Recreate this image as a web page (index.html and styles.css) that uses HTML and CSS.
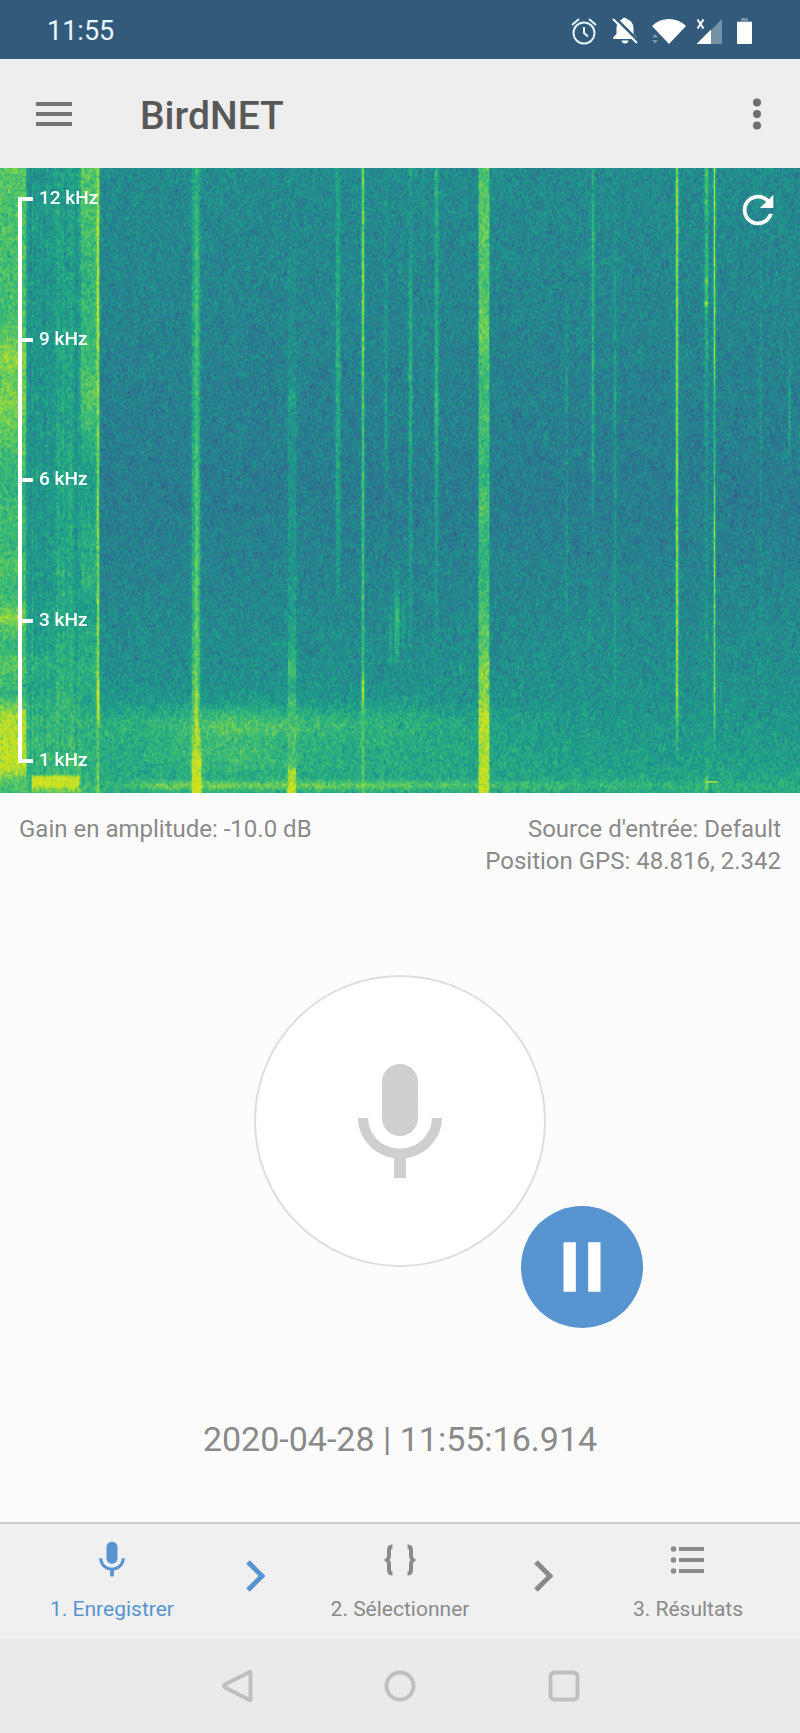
FILE: index.html
```html
<!DOCTYPE html>
<html lang="fr">

<head>
    <meta charset="UTF-8">
    <meta name="viewport" content="width=device-width, initial-scale=1.0">
    <title>BirdNET</title>
    <link rel="stylesheet" href="styles.css">
</head>

<body>

    <div class="status">
        <span>11:55</span>
        <div class="status-icons">
            <svg class="alarm" width="26" height="28" viewBox="0 0 26 28" fill="none" stroke="#e3f3ff" stroke-width="2">
                <circle cx="13" cy="16" r="10.5" />
                <path d="M13 10v6l4 3.5M1 8l7-6M25 8l-7-6" />
            </svg>
            <svg class="bell" width="28" height="28" viewBox="0 0 28 28">
                <path fill="#fff" d="M7.5 4.5Q9 3 11 2.500C11 0 16 0 16.500 2.500Q22 4 22.500 11V17L26 20.500V22H2V20.500L5.500 17V11Q5.500 8 6.500 6.500zM10.500 23.500H17.500Q17 26.500 14 26.500T10.500 23.500z" />
                <path stroke="#325a7b" stroke-width="2.500" d="M4 .5L28 24.500" />
                <path stroke="#fff" stroke-width="2" d="M2 2L26 26" />
            </svg>
            <svg class="wifi" width="36" height="28" viewBox="0 0 36 28">
                <path fill="#fff" d="M18 27L1 9Q8 2 18 2T35 9z" />
                <path fill="#7d98ae" d="M1 20.500L4 17l3 3.500zM1 23h6l-3 3.500z" />
            </svg>
            <svg class="signal" width="27" height="28" viewBox="0 0 27 28">
                <path fill="#7690a5" d="M26 2V27H15V13z" />
                <path fill="#fff" d="M15 12.500V27H.5z" />
                <path fill="none" stroke="#fff" stroke-width="2" d="M1.500 2.500L7.500 11.500M7.500 2.500L1.500 11.500" />
            </svg>
            <svg class="battery" width="15" height="28" viewBox="0 0 15 28">
                <path fill="#7690a5" d="M4 1h7v3h4v1H0V4h4z" />
                <rect y="5" width="15" height="22" rx="1" fill="#fff" />
            </svg>
        </div>
    </div>

    <header class="toolbar">
        <button type="button" aria-label="Menu">
            <svg width="48" height="48" viewBox="0 0 24 24" fill="#737373"><path d="M3 18h18v-2H3v2zm0-5h18v-2H3v2zm0-7v2h18V6H3z" /></svg>
        </button>
        <h1>BirdNET</h1>
        <button type="button" aria-label="Options">
            <svg width="48" height="48" viewBox="0 0 24 24" fill="#6e6e6e"><circle cx="12" cy="6.200" r="2" /><circle cx="12" cy="12" r="2" /><circle cx="12" cy="17.800" r="2" /></svg>
        </button>
    </header>

    <section class="spectro">
        <canvas id="spectro" width="800" height="625"></canvas>
        <ul class="scale">
            <li><span>12 kHz</span></li>
            <li><span>9 kHz</span></li>
            <li><span>6 kHz</span></li>
            <li><span>3 kHz</span></li>
            <li><span>1 kHz</span></li>
        </ul>
        <button type="button" class="refresh" aria-label="Actualiser">
            <svg width="46" height="46" viewBox="0 0 24 24" fill="#fff"><path d="M17.650 6.350C16.200 4.900 14.210 4 12 4c-4.420 0-7.990 3.580-7.990 8s3.570 8 7.990 8c3.730 0 6.840-2.550 7.730-6h-2.080c-.82 2.330-3.040 4-5.650 4-3.310 0-6-2.690-6-6s2.690-6 6-6c1.660 0 3.140.69 4.220 1.780L13 11h7V4l-2.350 2.350z" /></svg>
        </button>
    </section>

    <main class="content">
        <div class="info">
            <p>Gain en amplitude: -10.0 dB</p>
            <p class="right">Source d'entrée: Default<br>Position GPS: 48.816, 2.342</p>
        </div>

        <div class="recorder">
            <button type="button" class="mic" aria-label="Enregistrer">
                <svg width="144" height="144" viewBox="0 -0.500 24 24" fill="#cfcfcf"><path d="M12 14c1.660 0 2.990-1.340 2.990-3L15 5c0-1.660-1.340-3-3-3S9 3.340 9 5v6c0 1.660 1.340 3 3 3zm5.300-3c0 3-2.540 5.100-5.300 5.100S6.700 14 6.700 11H5c0 3.410 2.720 6.230 6 6.720V21h2v-3.280c3.280-.48 6-3.300 6-6.720h-1.700z" /></svg>
            </button>
            <button type="button" class="pause" aria-label="Pause">
                <svg width="74" height="74" viewBox="0 0 24 24" fill="#fff"><path d="M6 4h4v16H6zM14 4h4v16h-4z" /></svg>
            </button>
        </div>

        <time class="clock">2020-04-28 | 11:55:16.914</time>
    </main>

    <nav class="steps">
        <a href="#enregistrer" class="step active">
            <svg width="44" height="44" viewBox="0 0 24 24" fill="currentColor"><path d="M12 14c1.660 0 2.990-1.340 2.990-3L15 5c0-1.660-1.340-3-3-3S9 3.340 9 5v6c0 1.660 1.340 3 3 3zm5.300-3c0 3-2.540 5.100-5.300 5.100S6.700 14 6.700 11H5c0 3.410 2.720 6.230 6 6.720V21h2v-3.280c3.280-.48 6-3.300 6-6.720h-1.700z" /></svg>
            1. Enregistrer
        </a>
        <svg class="arrow active" width="24" height="34" viewBox="0 0 24 34" fill="none" stroke="currentColor" stroke-width="5"><path d="M4 3l14 14L4 31" /></svg>
        <a href="#selectionner" class="step">
            <svg width="44" height="44" viewBox="0 0 44 44" fill="none" stroke="currentColor" stroke-width="4">
                <path d="M14.500 8.500q-3.500 0-3.500 3.500v5.500q0 3-2 4.500 2 1.500 2 4.500V32q0 3.500 3.500 3.500M29.500 8.500Q33 8.500 33 12v5.500q0 3 2 4.500-2 1.500-2 4.500V32q0 3.500-3.500 3.500" />
            </svg>
            2. Sélectionner
        </a>
        <svg class="arrow" width="24" height="34" viewBox="0 0 24 34" fill="none" stroke="currentColor" stroke-width="5"><path d="M4 3l14 14L4 31" /></svg>
        <a href="#resultats" class="step">
            <svg width="44" height="44" viewBox="0 0 44 44" fill="currentColor">
                <circle cx="7.500" cy="11" r="2.800" /><circle cx="7.500" cy="22" r="2.800" /><circle cx="7.500" cy="33" r="2.800" />
                <path d="M13 9h25v4H13zM13 20h25v4H13zM13 31h25v4H13z" />
            </svg>
            3. Résultats
        </a>
    </nav>

    <div class="navbar">
        <button type="button" aria-label="Retour">
            <svg width="36" height="36" viewBox="-2 0 36 36"><path d="M30.500 4.500v27q0 1-1 .5L5 19.500q-2-1.500 0-3L29.500 4q1-.5 1 .5z" /></svg>
        </button>
        <button type="button" aria-label="Accueil">
            <svg width="36" height="36" viewBox="0 0 36 36"><circle cx="18" cy="18" r="13.500" /></svg>
        </button>
        <button type="button" aria-label="Applications">
            <svg width="36" height="36" viewBox="0 0 36 36"><rect x="4.500" y="4.500" width="27" height="27" rx="4" /></svg>
        </button>
    </div>

    <script src="script.js"></script>
</body>

</html>
```
FILE: styles.css
```css
* {
    box-sizing: border-box;
}

body {
    margin: 0;
    min-height: 100vh;
    display: flex;
    flex-direction: column;
    background: #fcfcfc;
    color: #8a8a8a;
    font-family: Roboto, sans-serif;
}

button {
    border: 0;
    padding: 0;
    background: none;
    cursor: pointer;
}

svg {
    display: block;
}

p {
    margin: 0;
}

.status {
    display: flex;
    justify-content: space-between;
    align-items: center;
    height: 59px;
    padding: 2px 48px 0 47px;
    background: #325a7b;
    color: #e9f7ff;
    font-size: 27px;
}

.status-icons {
    display: flex;
}

.bell {
    margin-left: 14px;
}

.wifi {
    margin-left: 12px;
}

.signal {
    margin-left: 9px;
}

.battery {
    margin-left: 14px;
}

.toolbar {
    display: flex;
    align-items: center;
    height: 109px;
    padding: 0 19px 0 30px;
    background: #eee;
}

.toolbar h1 {
    flex: 1;
    margin: 0;
    padding: 4px 0 0 62px;
    color: #585858;
    font-size: 39px;
    font-weight: 500;
}

.spectro {
    position: relative;
}

.spectro canvas {
    display: block;
    width: 100%;
}

/* frequency scale over the spectrogram */
.scale {
    position: absolute;
    top: 29px;
    bottom: 30px;
    left: 18px;
    display: flex;
    flex-direction: column;
    justify-content: space-between;
    margin: 0;
    padding: 0;
    border-left: 4px solid #fff;
    color: #fff;
    font-size: 19px;
    font-weight: 500;
    list-style: none;
}

.scale li {
    display: flex;
    align-items: center;
    height: 4px;
}

.scale li::before {
    content: "";
    width: 11px;
    height: 4px;
    margin-right: 6px;
    background: #fff;
}

.scale span {
    padding-bottom: 3px;
}

.refresh {
    position: absolute;
    top: 19px;
    right: 19px;
}

.content {
    flex: 1;
    display: flex;
    flex-direction: column;
    align-items: center;
}

.info {
    display: flex;
    justify-content: space-between;
    width: 100%;
    padding: 20px 19px 0;
    font-size: 24px;
    line-height: 32px;
}

.right {
    text-align: right;
}

.recorder {
    position: relative;
    margin-top: 98px;
}

.mic {
    display: flex;
    align-items: center;
    justify-content: center;
    width: 292px;
    height: 292px;
    border: 2px solid #dedede;
    border-radius: 50%;
    background: #fff;
}

.pause {
    position: absolute;
    right: -97px;
    bottom: -61px;
    display: flex;
    align-items: center;
    justify-content: center;
    width: 122px;
    height: 122px;
    border-radius: 50%;
    background: #5894d0;
}

.clock {
    margin-top: 152px;
    font-size: 34px;
    line-height: 40px;
}

.steps {
    display: grid;
    grid-template-columns: 28fr 8fr 28fr 8fr 28fr;
    align-items: center;
    justify-items: center;
    height: 117px;
    padding-bottom: 2px;
    border-top: 2px solid #ccc;
    background: #f0f0f0;
}

.step {
    display: flex;
    flex-direction: column;
    align-items: center;
    gap: 14px;
    padding-bottom: 2px;
    color: #8a8a8a;
    font-size: 21px;
    line-height: 26px;
    text-decoration: none;
}

.arrow {
    margin-bottom: 10px;
}

.active {
    color: #5894d0;
}

.navbar {
    display: flex;
    align-items: center;
    justify-content: center;
    gap: 128px;
    height: 94px;
    background: #eaeaea;
}

.navbar svg {
    fill: none;
    stroke: #bfbfbf;
    stroke-width: 4;
}
```
FILE: script.js
```javascript
var canvas = document.getElementById("spectro");
var ctx = canvas.getContext("2d");
var W = canvas.width, H = canvas.height;

// viridis
var colors = [[68, 1, 84], [72, 40, 120], [62, 74, 137], [49, 104, 142], [38, 130, 142],
    [31, 158, 137], [53, 183, 121], [109, 205, 89], [190, 223, 38], [225, 228, 30]];

var seed = 1155;
function rnd() {
    seed = (seed * 1664525 + 1013904223) % 4294967296;
    return seed / 4294967296;
}

// value at p in a list of [position, value]
function ramp(list, p) {
    if (p <= list[0][0]) return list[0][1];
    for (var i = 1; i < list.length; i++) {
        if (p <= list[i][0]) {
            var a = list[i - 1], b = list[i];
            return a[1] + (b[1] - a[1]) * (p - a[0]) / (b[0] - a[0]);
        }
    }
    return list[list.length - 1][1];
}

// grid of random numbers, cells of w x h pixels, blended between cells
function grain(w, h) {
    var cols = Math.ceil(W / w) + 2, cells = [];
    var count = cols * (Math.ceil(H / h) + 2);
    for (var i = 0; i < count; i++) {
        var n = (rnd() + rnd() + rnd()) / 1.5 - 1;
        if (rnd() < .01) n -= .9;
        cells.push(n);
    }
    return function (x, y) {
        var cx = x / w, cy = y / h;
        var ix = Math.floor(cx), iy = Math.floor(cy), fx = cx - ix, fy = cy - iy;
        var p = iy * cols + ix;
        return (cells[p] * (1 - fx) + cells[p + 1] * fx) * (1 - fy) +
            (cells[p + cols] * (1 - fx) + cells[p + cols + 1] * fx) * fy;
    };
}

var back = [[0, .48], [120, .455], [230, .435], [330, .42], [420, .455], [500, .495], [560, .53], [600, .57], [625, .6]];

// x from, x to, level along y
var streaks = [
    [0, 25, [[0, .74], [90, .7], [150, .69], [185, .82], [215, .76], [232, .8], [265, .74], [320, .64], [345, .7], [375, .65], [395, .73], [425, .66], [450, .81], [475, .66], [500, .74], [525, .64], [545, .86], [600, .9], [612, .74], [625, .7]]],
    [26, 80, [[0, .53], [230, .52], [400, .53], [480, .57], [500, .63], [520, .58], [550, .65], [600, .65], [625, .68]]],
    [32, 78, [[602, .4], [609, .92], [617, .92], [625, .7]]],
    [57, 71, [[0, .55], [200, .57], [460, .6], [540, .66], [600, .66]]],
    [81, 96, [[0, .74], [60, .7], [110, .65], [180, .67], [225, .73], [260, .66], [300, .56], [400, .62], [415, .65], [435, .55], [500, .65], [540, .57], [625, .66]]],
    [97, 98, [[0, .83], [140, .88], [300, .78], [500, .82], [530, .93], [555, .9], [560, .72], [625, .82]]],
    [192, 199, [[0, .57], [300, .6], [450, .63], [550, .7], [560, .8], [625, .9]]],
    [195, 197, [[0, .67], [300, .71], [500, .76], [560, .88], [625, .95]]],
    [193, 200, [[560, .4], [590, .9], [625, .95]]],
    [288, 295, [[0, .48], [215, .5], [230, .59], [245, .51], [330, .52], [450, .54], [480, .6], [505, .7], [520, .58], [535, .68], [570, .73], [590, .66], [605, .85], [625, .92]]],
    [336, 339, [[0, .57], [200, .61], [340, .57], [420, .52], [460, .4]]],
    [362, 363, [[0, .76], [120, .8], [260, .71], [500, .66], [515, .86], [530, .84], [545, .7], [625, .77]]],
    [385, 386, [[0, .5], [170, .53], [260, .56], [360, .45], [625, .4]]],
    [390, 390, [[420, .4], [460, .63], [490, .62], [510, .4]]],
    [395, 398, [[380, .4], [450, .66], [475, .65], [510, .45], [560, .57], [625, .6]]],
    [403, 403, [[400, .4], [450, .63], [500, .5]]],
    [409, 411, [[0, .57], [50, .5], [120, .6], [240, .61], [340, .53], [480, .53], [540, .5]]],
    [423, 423, [[0, .53], [60, .5], [260, .45], [400, .44], [625, .4]]],
    [435, 437, [[0, .62], [140, .59], [240, .65], [330, .57], [400, .53], [550, .5]]],
    [460, 460, [[480, .4], [500, .74], [515, .4]]],
    [479, 488, [[0, .71], [60, .76], [110, .71], [160, .78], [200, .7], [260, .69], [310, .66], [330, .71], [380, .65], [480, .73], [505, .84], [525, .78], [545, .9], [590, .87], [625, .9]]],
    [566, 566, [[0, .47], [190, .5], [230, .6], [260, .5], [440, .54], [500, .48]]],
    [589, 589, [[400, .4], [440, .54], [500, .54], [560, .4]]],
    [592, 593, [[0, .6], [80, .64], [230, .61], [330, .53], [400, .4]]],
    [614, 615, [[0, .47], [150, .53], [240, .57], [270, .5], [400, .52], [500, .57], [560, .53], [625, .59]]],
    [676, 677, [[0, .82], [240, .77], [300, .81], [540, .81], [560, .68], [610, .58]]],
    [705, 707, [[0, .71], [60, .63], [108, .66], [113, .79], [118, .65], [131, .68], [135, .83], [140, .64], [210, .53], [325, .5], [443, .51], [447, .65], [451, .51], [462, .51], [468, .68], [474, .51], [560, .55], [605, .6], [615, .83], [625, .65]]],
    [714, 714, [[0, .88], [200, .82], [220, .75], [235, .64], [300, .69], [360, .82], [540, .8], [575, .65], [600, .4]]],
    [760, 760, [[0, .52], [300, .5], [480, .48], [600, .56]]],
    [789, 789, [[0, .46], [190, .5], [250, .62], [280, .56], [320, .4]]]
];

// horizontal bands near the bottom: y, half height, strength along x
var bands = [
    [556, 18, [[0, .04], [160, .12], [230, .2], [300, .15], [420, .1], [480, .04], [650, 0]]],
    [588, 18, [[0, .02], [160, .07], [230, .13], [320, .06], [440, .04], [600, 0]]],
    [617, 5, [[120, .05], [160, .18], [380, .15], [490, .09], [800, .03]]]
];

var image = ctx.createImageData(W, H);
var fine = grain(1.6, 2.2);
var coarse = grain(5, 7);
var lines = [];
for (var x = 0; x < W; x++) lines.push(rnd() - .5);

for (var y = 0; y < H; y++) {
    var base = ramp(back, y);
    var levels = streaks.map(function (s) { return ramp(s[2], y); });
    for (x = 0; x < W; x++) {
        var v = base + (x < 100 ? .03 : 0);
        bands.forEach(function (b) {
            var d = (y - b[0]) / b[1];
            v += ramp(b[2], x) * Math.exp(-d * d);
        });
        streaks.forEach(function (s, k) {
            // soft edges
            var d = x < s[0] ? s[0] - x : x > s[1] ? x - s[1] : 0;
            if (d > 3 || levels[k] <= v) return;
            v += (levels[k] - v) * [1, .4, .12, .04][d];
        });
        if (x > 26 && x < 80) v += (lines[x] + lines[x - 1]) * .05;
        v += fine(x, y) * .15 + coarse(x, y) * .035;
        v = Math.max(0, Math.min(.94, v)) * (colors.length - 1);
        var c = colors[Math.floor(v)], e = colors[Math.floor(v) + 1], f = v - Math.floor(v);
        var o = (y * W + x) * 4;
        for (var m = 0; m < 3; m++) image.data[o + m] = c[m] + (e[m] - c[m]) * f;
        image.data[o + 3] = 255;
    }
}
ctx.putImageData(image, 0, 0);

// small marker at the foot of the 705 streak
ctx.fillStyle = "#8fd744";
ctx.fillRect(705, 613, 13, 2);
```
